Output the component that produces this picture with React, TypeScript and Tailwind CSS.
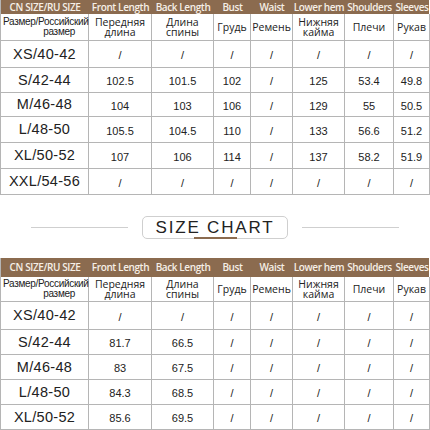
const cols = 'grid grid-cols-[88px_63px_62px_37px_42px_52px_49px_36px]'

const header = ['CN SIZE/RU SIZE', 'Front Length', 'Back Length', 'Bust', 'Waist', 'Lower hem', 'Shoulders', 'Sleeves']
const ruHeader = ['Передняя\nдлина', 'Длина\nспины', 'Грудь', 'Ремень', 'Нижняя\nкайма', 'Плечи', 'Рукав']

const topRows: { h: string; cells: string[] }[] = [
  { h: 'h-[27px]', cells: ['XS/40-42', '/', '/', '/', '/', '/', '/', '/'] },
  { h: 'h-[25px]', cells: ['S/42-44', '102.5', '101.5', '102', '/', '125', '53.4', '49.8'] },
  { h: 'h-[24px]', cells: ['M/46-48', '104', '103', '106', '/', '129', '55', '50.5'] },
  { h: 'h-[26px]', cells: ['L/48-50', '105.5', '104.5', '110', '/', '133', '56.6', '51.2'] },
  { h: 'h-[26px]', cells: ['XL/50-52', '107', '106', '114', '/', '137', '58.2', '51.9'] },
  { h: 'h-[26px]', cells: ['XXL/54-56', '/', '/', '/', '/', '/', '/', '/'] },
]

const bottomRows: { h: string; cells: string[] }[] = [
  { h: 'h-[28px]', cells: ['XS/40-42', '/', '/', '/', '/', '/', '/', '/'] },
  { h: 'h-[25px]', cells: ['S/42-44', '81.7', '66.5', '/', '/', '/', '/', '/'] },
  { h: 'h-[25px]', cells: ['M/46-48', '83', '67.5', '/', '/', '/', '/', '/'] },
  { h: 'h-[25px]', cells: ['L/48-50', '84.3', '68.5', '/', '/', '/', '/', '/'] },
  { h: 'h-[25px]', cells: ['XL/50-52', '85.6', '69.5', '/', '/', '/', '/', '/'] },
]

function SizeTable({ headerH, ruH, rows }: { headerH: string; ruH: string; rows: { h: string; cells: string[] }[] }) {
  return (
    <div className="w-[429px] border-l border-[#b5b5b5]">
      <div className={`${cols} ${headerH} bg-[#8b6b4f] font-['Open_Sans',sans-serif] text-[#f6efe6]`}>
        {header.map((t) => (
          <div key={t} className="flex items-center justify-center whitespace-nowrap text-[10px] font-semibold tracking-[-0.4px]">
            {t}
          </div>
        ))}
      </div>
      <div className={`${cols} ${ruH}`}>
        <div className="flex flex-col justify-center border-r border-b border-[#b5b5b5] text-[10px] leading-[10px] tracking-[-0.3px] whitespace-nowrap text-[#222]">
          <div className="pl-[2px]">Размер/Российский</div>
          <div className="text-right pr-[13px]">размер</div>
        </div>
        {ruHeader.map((t) => (
          <div
            key={t}
            className="flex items-center justify-center whitespace-pre-line border-r border-b border-[#b5b5b5] text-center font-['Open_Sans',sans-serif] text-[10.5px] leading-[10px] text-[#222]"
          >
            {t}
          </div>
        ))}
      </div>
      {rows.map((row) => (
        <div key={row.cells[0]} className={`${cols} ${row.h}`}>
          {row.cells.map((c, i) => (
            <div
              key={i}
              className={`flex items-center justify-center border-r border-b border-[#b5b5b5] text-[#222] ${i === 0 ? 'pt-[1px] text-[14.5px] tracking-[0.3px]' : 'pt-[3px] text-[11px]'}`}
            >
              {c}
            </div>
          ))}
        </div>
      ))}
    </div>
  )
}

export default function App() {
  return (
    <div className="h-[430px] w-[430px] overflow-hidden bg-white font-['Liberation_Sans',Arial,sans-serif]">
      <SizeTable headerH="h-[14px]" ruH="h-[27px]" rows={topRows} />
      <div className="flex h-[63px] items-center justify-center gap-[14px] pt-[2px]">
        <div className="h-px w-[97px] bg-[#cfcfcf]" />
        <div className="relative flex h-[23px] w-[146px] items-center justify-center rounded-[5px] border border-[#cfcfcf] text-[17px] tracking-[1.8px] text-[#222]">
          SIZE CHART
          <span className="absolute bottom-[-1px] left-[51px] h-[2px] w-[43px] bg-[#8b6b4f]" />
        </div>
        <div className="h-px w-[97px] bg-[#cfcfcf]" />
      </div>
      <SizeTable headerH="h-[19px]" ruH="h-[25px]" rows={bottomRows} />
    </div>
  )
}
